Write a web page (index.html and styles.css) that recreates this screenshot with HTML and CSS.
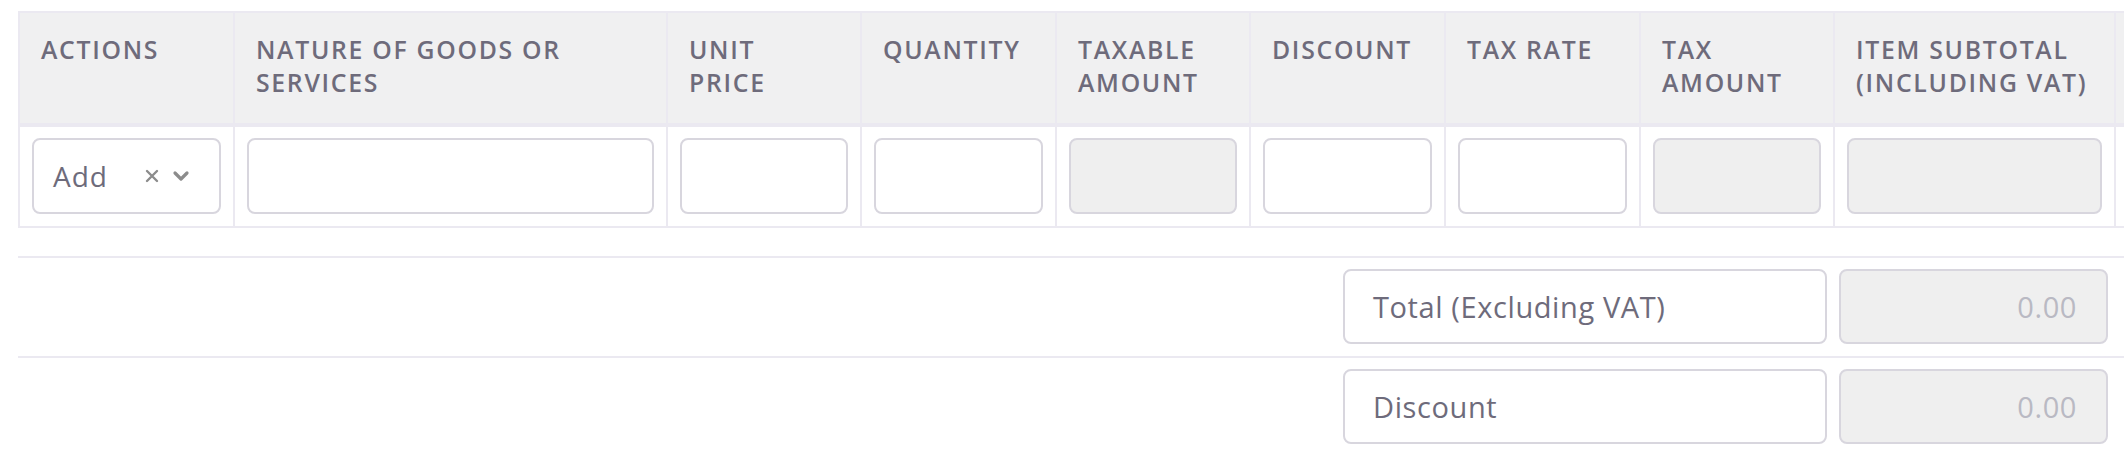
FILE: index.html
```html
<!DOCTYPE html>
<html lang="en">
<head>
<meta charset="utf-8">
<title>Invoice items</title>
<link rel="stylesheet" href="styles.css">
</head>
<body>
<div class="page">
  <div class="table-wrap">
    <table class="items">
      <thead>
        <tr>
          <th class="c-actions">ACTIONS</th>
          <th class="c-nature">NATURE OF GOODS OR<br>SERVICES</th>
          <th class="c-num">UNIT<br>PRICE</th>
          <th class="c-num2">QUANTITY</th>
          <th class="c-num">TAXABLE<br>AMOUNT</th>
          <th class="c-num2">DISCOUNT</th>
          <th class="c-num2">TAX RATE</th>
          <th class="c-num">TAX<br>AMOUNT</th>
          <th class="c-subtotal">ITEM SUBTOTAL<br>(INCLUDING VAT)</th>
          <th class="c-extra"></th>
        </tr>
      </thead>
      <tbody>
        <tr>
          <td>
            <div class="select">
              <span class="select-value">Add</span>
              <span class="select-icons">
                <svg class="icon-x" width="14" height="14" viewBox="0 0 14 14"><path d="M2 2L12 12M12 2L2 12" stroke="#8c8c8c" stroke-width="2.4" stroke-linecap="round"/></svg>
                <svg class="icon-chev" width="20" height="12" viewBox="0 0 20 12"><path d="M4 3L10 9L16 3" fill="none" stroke="#8c8c8c" stroke-width="3.2" stroke-linecap="round" stroke-linejoin="round"/></svg>
              </span>
            </div>
          </td>
          <td><input class="field" type="text"></td>
          <td><input class="field" type="text"></td>
          <td><input class="field" type="text"></td>
          <td><input class="field" type="text" disabled></td>
          <td><input class="field" type="text"></td>
          <td><input class="field" type="text"></td>
          <td><input class="field" type="text" disabled></td>
          <td><input class="field" type="text" disabled></td>
          <td></td>
        </tr>
      </tbody>
    </table>
  </div>

  <div class="totals">
    <div class="total-row">
      <div class="label-box">Total (Excluding VAT)</div>
      <div class="value-box">0.00</div>
    </div>
    <div class="total-row">
      <div class="label-box">Discount</div>
      <div class="value-box">0.00</div>
    </div>
  </div>
</div>
</body>
</html>
```

FILE: styles.css
```css
* {
  box-sizing: border-box;
}

html, body {
  margin: 0;
  padding: 0;
  background: #ffffff;
  font-family: "Open Sans", "Noto Sans", "Liberation Sans", sans-serif;
  color: #6e6b7b;
}

.page {
  width: 2124px;
  height: 456px;
  overflow: hidden;
  padding: 11px 0 0 18px;
}

.table-wrap {
  width: 100%;
  overflow: hidden;
}

.items {
  table-layout: fixed;
  border-collapse: separate;
  border-spacing: 0;
  width: 2298px;
  border-top: 2px solid #ebe9f1;
  border-left: 2px solid #ebe9f1;
}

.items th,
.items td {
  border-right: 2px solid #ebe9f1;
  border-bottom: 2px solid #ebe9f1;
}

.c-actions { width: 215px; }
.c-nature { width: 433px; }
.c-num { width: 194px; }
.c-num2 { width: 195px; }
.c-subtotal { width: 281px; }
.c-extra { width: 200px; }

.items th {
  background: #f0f0f1;
  text-align: left;
  vertical-align: top;
  font-weight: 600;
  font-size: 24.8px;
  line-height: 33px;
  letter-spacing: 1.7px;
  color: #6e6b7b;
  padding: 20px 10px 24px 21px;
  border-bottom-width: 4px;
  height: 114px;
}

.items td {
  padding: 11px 12px 12px 12px;
  height: 99px;
  vertical-align: top;
}

.field {
  display: block;
  width: 100%;
  height: 76px;
  border: 2px solid #d8d6de;
  border-radius: 8px;
  background: #ffffff;
  font-family: inherit;
  font-size: 28px;
  color: #6e6b7b;
  padding: 0 18px;
  outline: none;
}

.field:disabled {
  background: #efefef;
}

.select {
  display: flex;
  align-items: center;
  height: 76px;
  border: 2px solid #d8d6de;
  border-radius: 8px;
  padding: 0 28px 0 19px;
  background: #ffffff;
}

.select-value {
  font-size: 28px;
  letter-spacing: 1px;
  color: #6e6b7b;
}

.select-icons {
  margin-left: auto;
  display: flex;
  align-items: center;
  gap: 12px;
}

.icon-x,
.icon-chev {
  display: block;
}

.totals {
  margin-top: 28px;
}

.total-row {
  display: flex;
  justify-content: flex-end;
  gap: 12px;
  border-top: 2px solid #ebe9f1;
  padding: 11px 16px 12px 0;
}

.label-box,
.value-box {
  height: 75px;
  border: 2px solid #d8d6de;
  border-radius: 8px;
  display: flex;
  align-items: center;
  font-size: 29px;
  letter-spacing: 0.6px;
}

.label-box {
  width: 484px;
  padding-left: 28px;
  background: #ffffff;
  color: #6e6b7b;
}

.value-box {
  width: 269px;
  justify-content: flex-end;
  padding-right: 29px;
  background: #efefef;
  color: #b9b9c3;
}
```
